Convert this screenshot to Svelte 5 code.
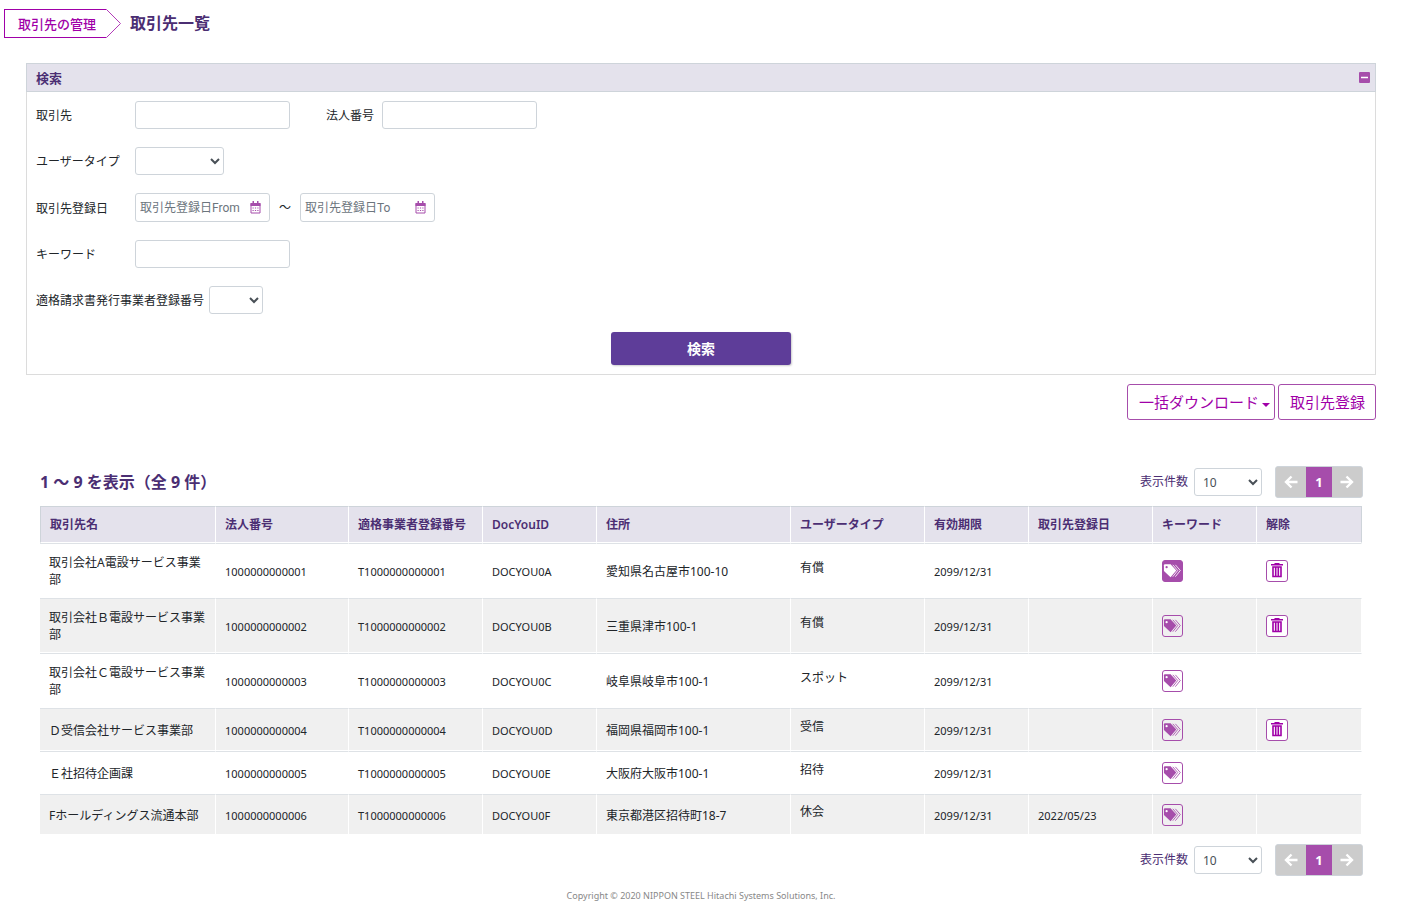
<script>
  let open = $state(true);
  let pageSize = $state("10");

  const columns = [
    { label: "取引先名", width: 176 },
    { label: "法人番号", width: 133 },
    { label: "適格事業者登録番号", width: 134 },
    { label: "DocYouID", width: 114 },
    { label: "住所", width: 194 },
    { label: "ユーザータイプ", width: 134 },
    { label: "有効期限", width: 104 },
    { label: "取引先登録日", width: 124 },
    { label: "キーワード", width: 104 },
    { label: "解除", width: 105 },
  ];
  const total = columns.reduce((sum, c) => sum + c.width, 0);

  const rows = [
    { name: "取引会社A電設サービス事業部", no: "1000000000001", id: "DOCYOU0A", address: "愛知県名古屋市100-10", type: "有償", date: "", tagged: true, removable: true },
    { name: "取引会社Ｂ電設サービス事業部", no: "1000000000002", id: "DOCYOU0B", address: "三重県津市100-1", type: "有償", date: "", removable: true },
    { name: "取引会社Ｃ電設サービス事業部", no: "1000000000003", id: "DOCYOU0C", address: "岐阜県岐阜市100-1", type: "スポット", date: "" },
    { name: "Ｄ受信会社サービス事業部", no: "1000000000004", id: "DOCYOU0D", address: "福岡県福岡市100-1", type: "受信", date: "", removable: true },
    { name: "Ｅ社招待企画課", no: "1000000000005", id: "DOCYOU0E", address: "大阪府大阪市100-1", type: "招待", date: "" },
    { name: "Fホールディングス流通本部", no: "1000000000006", id: "DOCYOU0F", address: "東京都港区招待町18-7", type: "休会", date: "2022/05/23" },
  ];
</script>

{#snippet calendar()}
  <svg class="calendar" viewBox="0 0 11 13" aria-hidden="true">
    <path d="M1 2.5h9v9.5H1z" fill="#fff" stroke="#a64dab" />
    <path d="M.5 2h10v3H.5zM2.5 0h1.5v3H2.5zM7 0h1.5v3H7z" fill="#a64dab" />
    <path d="M2.5 7h1.2M4.9 7h1.2M7.3 7h1.2M2.5 9.5h1.2M4.9 9.5h1.2M7.3 9.5h1.2" stroke="#a64dab" stroke-width="1.2" />
  </svg>
{/snippet}

{#snippet pager(id)}
  <div class="pager">
    <label for={id}>表示件数</label>
    <select {id} class="size" bind:value={pageSize}>
      <option>10</option>
      <option>20</option>
      <option>50</option>
    </select>
    <nav class="pages" aria-label="ページ">
      <button aria-label="前へ">
        <svg viewBox="0 0 14 14"><path d="M13.5 7H2M7.5 1.5L2 7l5.5 5.5" /></svg>
      </button>
      <button class="current">1</button>
      <button aria-label="次へ">
        <svg viewBox="0 0 14 14"><path d="M.5 7H12M6.5 1.5L12 7l-5.5 5.5" /></svg>
      </button>
    </nav>
  </div>
{/snippet}

<div class="page" lang="ja">
  <header>
    <a href="#partners" class="crumb">
      <span>取引先の管理</span>
      <svg viewBox="0 0 15 29" aria-hidden="true"><path d="M0 .5h.5l14 14-14 14H0" /></svg>
    </a>
    <h1>取引先一覧</h1>
  </header>

  <main>
    <section class="panel">
      <div class="panel-head">
        <h2>検索</h2>
        <button class="toggle" aria-label="開閉" onclick={() => (open = !open)}>
          <svg viewBox="0 0 11 11"><rect width="11" height="11" rx="1" fill="#a64dab" /><path d="M2 5.5h7" stroke="#fff" stroke-width="1.5" /></svg>
        </button>
      </div>
      {#if open}
        <form onsubmit={(e) => e.preventDefault()}>
          <div class="row">
            <label for="partner">取引先</label>
            <input id="partner" type="text" />
            <label for="corp" class="second">法人番号</label>
            <input id="corp" type="text" />
          </div>
          <div class="row">
            <label for="userType">ユーザータイプ</label>
            <select id="userType" class="user-type"><option></option></select>
          </div>
          <div class="row">
            <label for="from">取引先登録日</label>
            <div class="date"><input id="from" type="text" placeholder="取引先登録日From" />{@render calendar()}</div>
            <span class="tilde">～</span>
            <div class="date"><input type="text" aria-label="取引先登録日To" placeholder="取引先登録日To" />{@render calendar()}</div>
          </div>
          <div class="row">
            <label for="keyword">キーワード</label>
            <input id="keyword" type="text" />
          </div>
          <div class="row">
            <label for="invoice" class="long">適格請求書発行事業者登録番号</label>
            <select id="invoice" class="invoice"><option></option></select>
          </div>
          <button class="search">検索</button>
        </form>
      {/if}
    </section>

    <div class="actions">
      <button class="download">一括ダウンロード<i class="caret"></i></button>
      <button>取引先登録</button>
    </div>

    <section class="results">
      <div class="results-head">
        <h2>1 ～ 9 を表示（全 9 件）</h2>
        {@render pager("sizeTop")}
      </div>

      <table>
        <colgroup>
          {#each columns as c}
            <col style="width: {(c.width / total) * 100}%" />
          {/each}
        </colgroup>
        <thead>
          <tr>
            {#each columns as c}<th>{c.label}</th>{/each}
          </tr>
        </thead>
        <tbody>
          {#each rows as r}
            <tr>
              <td>{r.name}</td>
              <td class="code">{r.no}</td>
              <td class="code">T{r.no}</td>
              <td class="code">{r.id}</td>
              <td>{r.address}</td>
              <td class="type">{r.type}</td>
              <td class="code">2099/12/31</td>
              <td class="code">{r.date}</td>
              <td class="tool">
                <button class="icon tag" class:filled={r.tagged} aria-label="キーワード">
                  <svg viewBox="0 0 20 20">
                    <path d="M1 4q0-1 1-1h6l6 6.5-6 7L1 10z" fill="currentColor" />
                    <path d="M10.3 3.5l5.2 6-5.2 6.500M13 3.500l5.200 6-5.200 6.500" fill="none" stroke="currentColor" stroke-width=".9" />
                    <circle class="hole" cx="3.800" cy="6" r="1.200" />
                  </svg>
                </button>
              </td>
              <td class="tool">
                {#if r.removable}
                  <button class="icon trash" aria-label="解除">
                    <svg viewBox="0 0 20 20">
                      <path d="M7.5 2h5v1H16v1.5H4V3h3.5z" fill="currentColor" />
                      <path d="M6 6h8v9.5H6zM8.7 6v9.5M11.3 6v9.5" fill="none" stroke="currentColor" stroke-width="1.6" />
                    </svg>
                  </button>
                {/if}
              </td>
            </tr>
          {/each}
        </tbody>
      </table>

      {@render pager("sizeBottom")}
    </section>
  </main>

  <footer>Copyright © 2020 NIPPON STEEL Hitachi Systems Solutions, Inc.</footer>
</div>

<style>
  :global(body) {
    margin: 0;
    background: #fff;
  }

  .page {
    padding: 9px 5px 16px 0;
    font: 12px/18px "Noto Sans", "Noto Sans CJK JP", sans-serif;
    color: #212529;
  }

  button,
  input,
  select {
    box-sizing: border-box;
    font: inherit;
  }

  button {
    cursor: pointer;
  }

  h1,
  h2 {
    margin: 0;
    color: #4b2e73;
  }

  header {
    display: flex;
    gap: 9px;
    padding-left: 4px;
  }

  .crumb {
    display: flex;
    height: 29px;
    color: #a000a8;
    font-size: 13px;
    font-weight: 500;
    line-height: 28px;
    text-decoration: none;
  }

  .crumb span {
    box-sizing: border-box;
    padding: 0 10px 0 13px;
    border: 1px solid #a000a8;
    border-right: 0;
  }

  .crumb svg {
    width: 15px;
    height: 29px;
    fill: none;
    stroke: #b23bb8;
  }

  h1 {
    font-size: 16px;
    line-height: 28px;
  }

  main {
    padding: 25px 26px 0;
  }

  .panel {
    border: 1px solid #dcdcdc;
  }

  .panel-head {
    display: flex;
    align-items: center;
    justify-content: space-between;
    margin: -1px -1px 0;
    padding: 0 5px 0 9px;
    height: 27px;
    background: #e4e2ec;
    border: 1px solid #ced4da;
  }

  .panel-head h2 {
    font-size: 13px;
    font-weight: 600;
  }

  .toggle {
    display: flex;
    padding: 0;
    border: 0;
    background: none;
  }

  .toggle svg {
    width: 11px;
    height: 11px;
  }

  form {
    display: flex;
    flex-direction: column;
    gap: 18px;
    padding: 9px;
  }

  .row {
    display: flex;
    align-items: center;
  }

  .row label {
    width: 99px;
    padding-top: 2px;
  }

  .row .second {
    width: 56px;
    margin-left: 36px;
  }

  .row .long {
    width: auto;
    margin-right: 5px;
  }

  input,
  select {
    height: 28px;
    border: 1px solid #ced4da;
    border-radius: 3px;
    background: #fff;
    color: #495057;
  }

  input {
    width: 155px;
    padding: 0 5px;
  }

  input::placeholder {
    color: #6c757d;
  }

  .user-type {
    width: 89px;
  }

  .invoice {
    width: 54px;
  }

  .date {
    display: flex;
    position: relative;
  }

  .date input {
    width: 135px;
    height: 29px;
    padding-right: 24px;
    padding-left: 4px;
    font-family: Roboto, "Noto Sans CJK JP", sans-serif;
  }

  .calendar {
    position: absolute;
    top: 8px;
    right: 9px;
    width: 11px;
    height: 13px;
  }

  .tilde {
    width: 30px;
    text-align: center;
  }

  .search {
    align-self: center;
    width: 180px;
    height: 33px;
    border: 0;
    border-radius: 3px;
    background: #5e3d99;
    color: #fff;
    font-size: 14px;
    font-weight: bold;
    box-shadow: 1px 1px 2px rgba(0, 0, 0, 0.2);
  }

  .actions {
    display: flex;
    justify-content: flex-end;
    gap: 3px;
    margin-top: 9px;
  }

  .actions button {
    height: 36px;
    padding: 0 10px 1px 11px;
    border: 1px solid #a64dab;
    border-radius: 3px;
    background: #fff;
    color: #a000a8;
    font-size: 15px;
  }

  .actions .download {
    padding-right: 4px;
  }

  .caret {
    display: inline-block;
    margin-left: 3px;
    border: 4px solid transparent;
    border-top-color: #a000a8;
    border-bottom: 0;
    vertical-align: 1px;
  }

  .results {
    margin-top: 46px;
    padding: 0 14px;
  }

  .results-head {
    display: flex;
    align-items: center;
    justify-content: space-between;
    margin-bottom: 8px;
  }

  .results-head h2 {
    font-size: 16px;
  }

  .pager {
    display: flex;
    align-items: center;
    justify-content: flex-end;
    margin-right: -1px;
    color: #4b2e73;
  }

  .size {
    width: 68px;
    margin: 0 13px 0 6px;
    padding-left: 4px;
  }

  .pages {
    display: flex;
    height: 30px;
    border: 1px solid #ced4da;
    border-radius: 3px;
    background: #ccc;
    overflow: hidden;
  }

  .pages button {
    display: flex;
    align-items: center;
    justify-content: center;
    width: 30px;
    padding: 0;
    border: 0;
    background: #ccc;
    color: #fff;
    font-size: 13px;
    font-weight: bold;
  }

  .pages .current {
    width: 26px;
    background: #a64dab;
  }

  .pages svg {
    width: 14px;
    height: 14px;
    fill: none;
    stroke: #fff;
    stroke-width: 2.4;
  }

  table {
    width: 100%;
    margin-bottom: 9px;
    table-layout: fixed;
    border-collapse: separate;
    border-spacing: 0;
  }

  th,
  td {
    box-sizing: border-box;
    padding: 10px 8px 9px 9px;
    border-top: 1px solid #dee2e6;
    border-right: 1px solid #fff;
    border-bottom: 1px solid #fff;
    text-align: left;
    line-height: 17px;
  }

  th {
    height: 37px;
    padding-top: 8px;
    background: #e4e2ec;
    border-top-color: #ced4da;
    color: #4b2e73;
    font-weight: 600;
    white-space: nowrap;
  }

  th:first-child {
    border-left: 1px solid #ced4da;
  }

  th:last-child {
    border-right-color: #ced4da;
  }

  td {
    height: 43px;
  }

  tbody tr:nth-child(even) td {
    background: #f0f0f0;
  }

  tbody tr:last-child td {
    height: 41px;
  }

  .code {
    font-size: 11px;
  }

  td.type {
    padding-top: 6px;
    padding-bottom: 12px;
  }

  td.tool {
    padding-top: 8px;
    padding-bottom: 8px;
  }

  .icon {
    display: flex;
    width: 22px;
    height: 22px;
    padding: 0;
    border: 1px solid #a64dab;
    border-radius: 3px;
    background: none;
    color: #a64dab;
  }

  .icon svg {
    width: 20px;
    height: 20px;
  }

  .tag {
    width: 21px;
  }

  .tag svg {
    width: 19px;
  }

  .hole {
    fill: #fff;
  }

  .filled {
    background: #a64dab;
    color: #fff;
  }

  .filled .hole {
    fill: #a64dab;
  }

  .trash {
    background: #fff;
    color: #a000a8;
  }

  footer {
    margin-top: 11px;
    color: #888;
    font-size: 9px;
    text-align: center;
  }
</style>
